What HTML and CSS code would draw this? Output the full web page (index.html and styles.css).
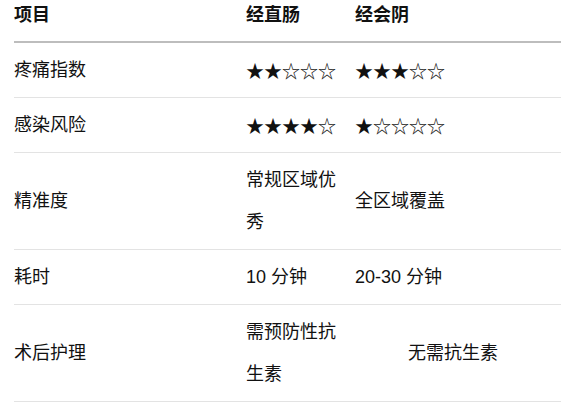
FILE: index.html
```html
<!DOCTYPE html>
<html lang="zh-CN">
<head>
<meta charset="utf-8">
<link rel="stylesheet" href="styles.css">
</head>
<body>
<table class="cmp">
  <colgroup>
    <col class="c1">
    <col class="c2">
    <col class="c3">
  </colgroup>
  <thead>
    <tr><th>项目</th><th>经直肠</th><th>经会阴</th></tr>
  </thead>
  <tbody>
    <tr><td>疼痛指数</td><td class="stars">★★☆☆☆</td><td class="stars">★★★☆☆</td></tr>
    <tr><td>感染风险</td><td class="stars">★★★★☆</td><td class="stars">★☆☆☆☆</td></tr>
    <tr><td>精准度</td><td>常规区域优秀</td><td>全区域覆盖</td></tr>
    <tr><td>耗时</td><td>10 分钟</td><td>20-30 分钟</td></tr>
    <tr><td>术后护理</td><td>需预防性抗生素</td><td class="center">无需抗生素</td></tr>
  </tbody>
</table>
</body>
</html>
```

FILE: styles.css
```css
html, body {
  margin: 0;
  padding: 0;
  background: #fff;
}
body {
  font-family: "Liberation Sans", "Noto Sans CJK SC", sans-serif;
  font-size: 18px;
  color: #111;
}
.cmp {
  margin-left: 14px;
  width: 547px;
  border-collapse: collapse;
  table-layout: fixed;
}
.c1 { width: 232px; }
.c2 { width: 109px; }
.cmp th {
  text-align: left;
  font-weight: bold;
  line-height: 30px;
  padding: 0 10px 11px 0;
  border-bottom: 2px solid #bdbdbd;
  vertical-align: middle;
}
.cmp td {
  text-align: left;
  line-height: 42px;
  padding: 6px 10px 6px 0;
  border-bottom: 1px solid #e3e3e3;
  vertical-align: middle;
}
.cmp td.center {
  text-align: center;
}
.stars {
  font-family: "Noto Sans CJK SC", sans-serif;
}
.stars-inner {
  position: relative;
}
```
